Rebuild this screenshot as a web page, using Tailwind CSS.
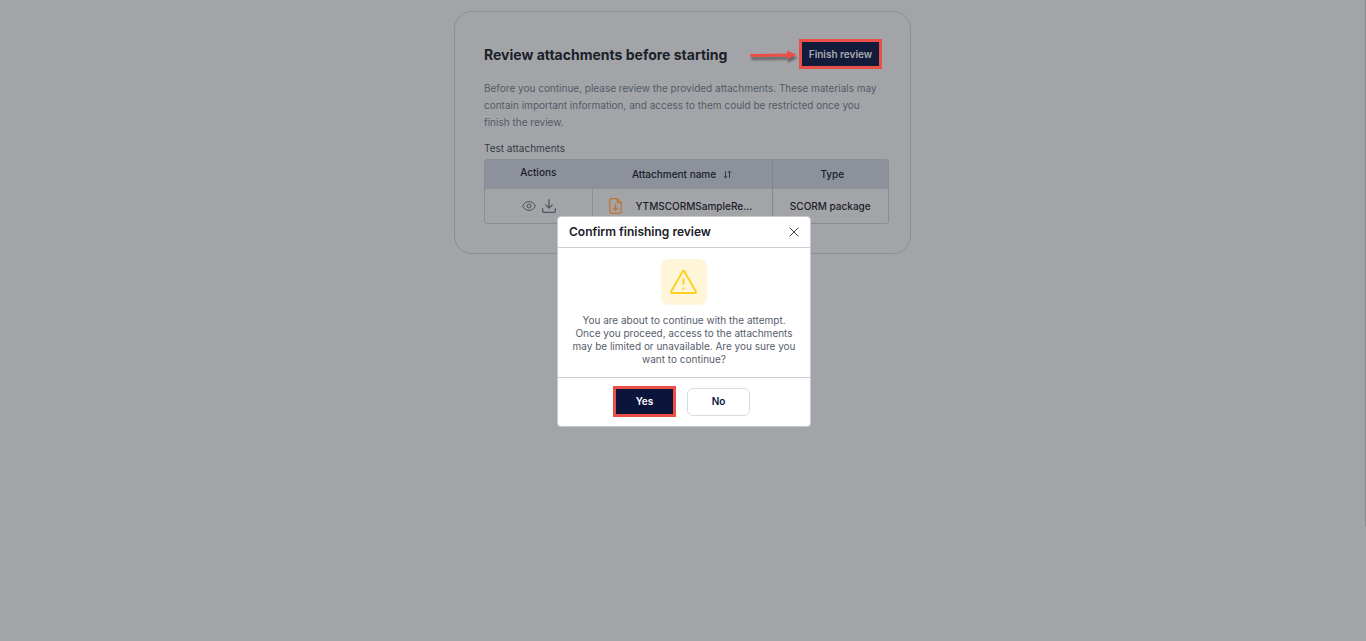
<!DOCTYPE html>
<html lang="en">

<head>
    <meta charset="UTF-8" />
    <meta name="viewport" content="width=device-width, initial-scale=1.0" />
    <title>Review attachments</title>

    <script src="https://cdn.jsdelivr.net/npm/@tailwindcss/browser@4"></script>
</head>

<body class="min-h-screen bg-[#a3a4a8] pt-[11px] pr-[17px] pl-4 font-['Inter',sans-serif] text-[#1a2129]">

    <main class="mx-auto w-full max-w-[457px] rounded-[18px] border border-[#8a8f97] pt-[27px] pr-[21px] pb-[29px] pl-[29px]">
        <div class="flex items-center justify-between pr-[7px]">
            <h1 class="pt-[2px] text-[14px] leading-5 font-bold whitespace-nowrap">Review attachments before starting</h1>
            <div class="flex items-center gap-[2px]">
                <svg class="h-4 w-12 drop-shadow-[1px_3px_1px_rgba(0,0,0,0.4)]" viewBox="0 0 48 16" fill="none" aria-hidden="true">
                    <path d="M2.5 9.500L40 9" stroke="#e94f46" stroke-width="3" stroke-linecap="round" />
                    <path d="M38 4.200L47.500 8.800L38 13.600Z" fill="#e94f46" />
                </svg>
                <button type="button" class="h-[30px] w-[83px] border-3 border-[#e94f46] bg-[#121b39] text-[10px] font-semibold whitespace-nowrap text-[#a9abb2]">Finish review</button>
            </div>
        </div>

        <p class="mt-[11px] pr-[7px] text-[10px] leading-[17px] text-[#525b66]">Before you continue, please review the provided attachments. These materials may contain important information, and access to them could be restricted once you finish the review.</p>

        <h2 class="mt-[9px] text-[10px] leading-4 text-[#343c46]">Test attachments</h2>
        <div class="mt-[3px] overflow-hidden rounded-[3px] border border-[#888d95]">
            <table class="w-full table-fixed text-[10px] font-medium">
                <colgroup>
                    <col class="w-[107px]" />
                    <col />
                    <col class="w-[116px]" />
                </colgroup>
                <thead class="bg-[#8d919b]">
                    <tr class="h-[29px]">
                        <th class="border-r border-[#8a8f98] pb-1 font-medium">Actions</th>
                        <th class="border-r border-[#81868f] font-medium">
                            <span class="flex items-center justify-center gap-[7px]">Attachment name
                                <svg class="size-[9px]" viewBox="0 0 9 9" fill="none" stroke="#2b323b" stroke-width=".9" aria-hidden="true">
                                    <path d="M2.5 1v7M1 6.3L2.5 8L4 6.3M6.5 8V1M5 2.7L6.5 1L8 2.7" />
                                </svg>
                            </span>
                        </th>
                        <th class="pl-1 font-medium">Type</th>
                    </tr>
                </thead>
                <tbody>
                    <tr class="h-[34px]">
                        <td class="border-r border-[#8a8f97]">
                            <div class="flex items-center justify-center gap-[6px] pl-[2px] text-[#4b545f]">
                                <button type="button" aria-label="View">
                                    <svg class="block h-[14px] w-[14px]" viewBox="0 0 14 14" fill="none" stroke="currentColor">
                                        <path d="M.6 7C2 4 4.3 2.6 7 2.6S12 4 13.4 7C12 10 9.700 11.400 7 11.400S2 10 .6 7Z" />
                                        <circle cx="7" cy="7" r="2" />
                                    </svg>
                                </button>
                                <button type="button" aria-label="Download">
                                    <svg class="block h-[14px] w-[14px]" viewBox="0 0 14 14" fill="none" stroke="currentColor" stroke-width="1.200" stroke-linecap="round" stroke-linejoin="round">
                                        <path d="M7 .7V9M3.700 5.800L7 9.100L10.300 5.800M.7 9.600V12.200C.7 12.900 1.200 13.300 1.800 13.300H12.200C12.800 13.300 13.300 12.900 13.300 12.200V9.600" />
                                    </svg>
                                </button>
                            </div>
                        </td>
                        <td class="border-r border-[#81868f]">
                            <div class="flex items-center gap-[14px] pl-4">
                                <svg class="h-4 w-[13px] shrink-0" viewBox="0 0 13 16" fill="none" stroke="#bd7630" stroke-width="1.300" stroke-linecap="round" stroke-linejoin="round" aria-hidden="true">
                                    <path d="M8.300 .7H2.400C1.400 .7 .7 1.400 .7 2.400V13.600C.7 14.600 1.400 15.300 2.400 15.300H10.600C11.600 15.300 12.300 14.600 12.300 13.600V4.700L8.300 .7V4.700H12.300" />
                                    <path d="M6.500 6.300V12.300M4.300 10.100L6.500 12.300L8.700 10.100" />
                                </svg>
                                <span>YTMSCORMSampleRe...</span>
                            </div>
                        </td>
                        <td class="text-center">SCORM package</td>
                    </tr>
                </tbody>
            </table>
        </div>
    </main>

    <!-- scroll thumb at the window edge -->
    <div class="fixed top-0 right-0 h-[82%] w-px bg-[#8b8c90]"></div>

    <div class="fixed inset-0 flex items-center justify-center pt-[2px] pl-[2px]">
        <div role="dialog" aria-modal="true" aria-labelledby="dialog-title" class="w-full max-w-[254px] rounded-[4px] border border-[#c3cad2] bg-white">
            <div class="flex h-[31px] items-center justify-between border-b border-[#c9d0d7] px-[11px]">
                <h2 id="dialog-title" class="text-[12px] font-semibold">Confirm finishing review</h2>
                <button type="button" aria-label="Close">
                    <svg class="block size-[10px]" viewBox="0 0 10 10" fill="none" stroke="#39424c" stroke-linecap="round">
                        <path d="M1 1L9 9M9 1L1 9" />
                    </svg>
                </button>
            </div>
            <div class="flex flex-col items-center px-3 py-[11px]">
                <div class="flex size-[46px] items-center justify-center rounded-[8px] bg-[#fff5d9]">
                    <svg class="size-7" viewBox="0 0 28 28" fill="none" stroke="#ffcf24" stroke-width="2" stroke-linejoin="round" aria-hidden="true">
                        <path d="M12.800 3.200L1.300 23.200C.8 24.200 1.200 25 2.300 25H24.700C25.800 25 26.200 24.200 25.700 23.200L14.200 3.200C13.900 2.600 13.100 2.600 12.800 3.200Z" />
                        <path d="M13.500 10.500V16.500M13.500 19.500V21.500" />
                    </svg>
                </div>
                <p class="mt-[9px] text-center text-[10px] leading-[13px] text-[#56606b]">You are about to continue with the attempt. Once you proceed, access to the attachments may be limited or unavailable. Are you sure you want to continue?</p>
            </div>
            <div class="flex h-[49px] items-center justify-center gap-[11px] border-t border-[#c9d0d7] pr-[5px] pb-px">
                <button type="button" class="h-[31px] w-[63px] border-3 border-[#e94f46] bg-[#0b153b] text-[10px] font-semibold text-white">Yes</button>
                <button type="button" class="h-7 w-[63px] rounded-[6px] border border-[#d5dce3] text-[10px] font-semibold text-[#0b153b]">No</button>
            </div>
        </div>
    </div>

</body>

</html>
